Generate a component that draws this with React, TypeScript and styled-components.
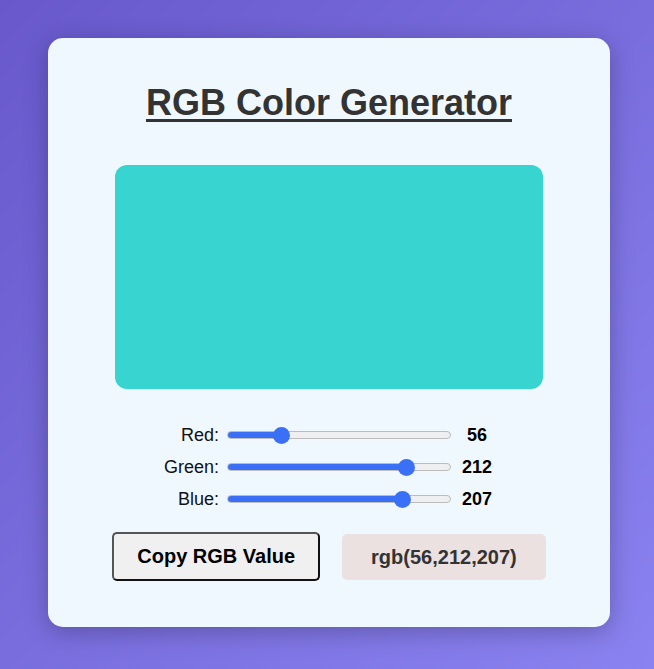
import React, { useState } from "react";
import styled, { createGlobalStyle } from "styled-components";

const GlobalStyle = createGlobalStyle`
	* {
		box-sizing: border-box;
	}
	body {
		margin: 0;
		font-family: "Liberation Sans", Arial, sans-serif;
	}
`;

const Page = styled.div`
	min-height: 100vh;
	display: flex;
	align-items: center;
	justify-content: center;
	padding: 0 0 4px 4px;
	background: linear-gradient(135deg, #6858cc, #8a82f0);
`;

const Card = styled.div`
	width: 562px;
	background-color: #f0f8ff;
	border-radius: 15px;
	box-shadow: 0 5px 25px rgba(0, 0, 0, 0.25);
	padding: 44px 0 46px;
	display: flex;
	flex-direction: column;
	align-items: center;
`;

const Title = styled.h1`
	margin: 0 0 41px;
	font-size: 36px;
	font-weight: bold;
	color: #333;
	text-decoration: underline;
	text-underline-offset: 4px;
	text-decoration-thickness: 3px;
`;

const Preview = styled.div<{ $color: string }>`
	width: 428px;
	height: 224px;
	border-radius: 12px;
	background-color: ${(p) => p.$color};
	margin-bottom: 35px;
`;

const Sliders = styled.div`
	display: flex;
	flex-direction: column;
	gap: 10px;
	margin-bottom: 22px;
`;

const SliderRow = styled.div`
	display: flex;
	align-items: center;
	height: 22px;
`;

const Label = styled.label`
	width: 58px;
	text-align: right;
	font-size: 18px;
	color: #111;
	margin-right: 5px;
	white-space: nowrap;
`;

const Range = styled.input`
	-webkit-appearance: none;
	appearance: none;
	width: 224px;
	height: 18px;
	margin: 0 2px 0 3px;
	background: transparent;
	cursor: pointer;

	&::-webkit-slider-runnable-track {
		height: 8px;
		border-radius: 4px;
		border: 1px solid #bcbcbc;
		background: linear-gradient(
			to right,
			#3a70f6 var(--fill),
			#efefef var(--fill)
		);
	}

	&::-webkit-slider-thumb {
		-webkit-appearance: none;
		appearance: none;
		width: 17px;
		height: 17px;
		border-radius: 50%;
		background: #3a70f6;
		border: none;
		margin-top: -5.5px;
	}
`;

const Value = styled.span`
	width: 40px;
	margin-left: 4px;
	text-align: center;
	font-size: 18px;
	font-weight: bold;
	color: #000;
`;

const Actions = styled.div`
	display: flex;
	align-items: center;
	gap: 22px;
`;

const CopyButton = styled.button`
	font-family: inherit;
	font-size: 20px;
	font-weight: bold;
	line-height: 23px;
	color: #000;
	background-color: #f0f0f0;
	border: 2px solid;
	border-color: #555 #111 #111 #555;
	border-radius: 5px;
	padding: 11px 23px;
	cursor: pointer;
`;

const RgbDisplay = styled.div`
	font-size: 20px;
	font-weight: bold;
	line-height: 22px;
	color: #333;
	background-color: #ece1e1;
	border-radius: 5px;
	padding: 12px 29px;
`;

type Channel = "red" | "green" | "blue";

const TRACK_WIDTH = 224;
const THUMB = 17;

// position of the thumb centre along the track, as a percentage
const fillPercent = (v: number) =>
	((THUMB / 2 + (v / 255) * (TRACK_WIDTH - THUMB)) / TRACK_WIDTH) * 100;

const App: React.FC = () => {
	const [rgb, setRgb] = useState<Record<Channel, number>>({
		red: 56,
		green: 212,
		blue: 207,
	});

	const value = `rgb(${rgb.red},${rgb.green},${rgb.blue})`;

	const channels: { key: Channel; label: string }[] = [
		{ key: "red", label: "Red:" },
		{ key: "green", label: "Green:" },
		{ key: "blue", label: "Blue:" },
	];

	return (
		<>
			<GlobalStyle />
			<Page>
				<Card>
					<Title>RGB Color Generator</Title>
					<Preview $color={value} />
					<Sliders>
						{channels.map((c) => (
							<SliderRow key={c.key}>
								<Label htmlFor={c.key}>{c.label}</Label>
								<Range
									id={c.key}
									type="range"
									min={0}
									max={255}
									value={rgb[c.key]}
									style={
										{
											"--fill": `${fillPercent(rgb[c.key])}%`,
										} as React.CSSProperties
									}
									onChange={(e) =>
										setRgb({ ...rgb, [c.key]: Number(e.target.value) })
									}
								/>
								<Value>{rgb[c.key]}</Value>
							</SliderRow>
						))}
					</Sliders>
					<Actions>
						<CopyButton
							onClick={() => {
								navigator.clipboard?.writeText(value);
							}}
						>
							Copy RGB Value
						</CopyButton>
						<RgbDisplay>{value}</RgbDisplay>
					</Actions>
				</Card>
			</Page>
		</>
	);
};

export default App;
